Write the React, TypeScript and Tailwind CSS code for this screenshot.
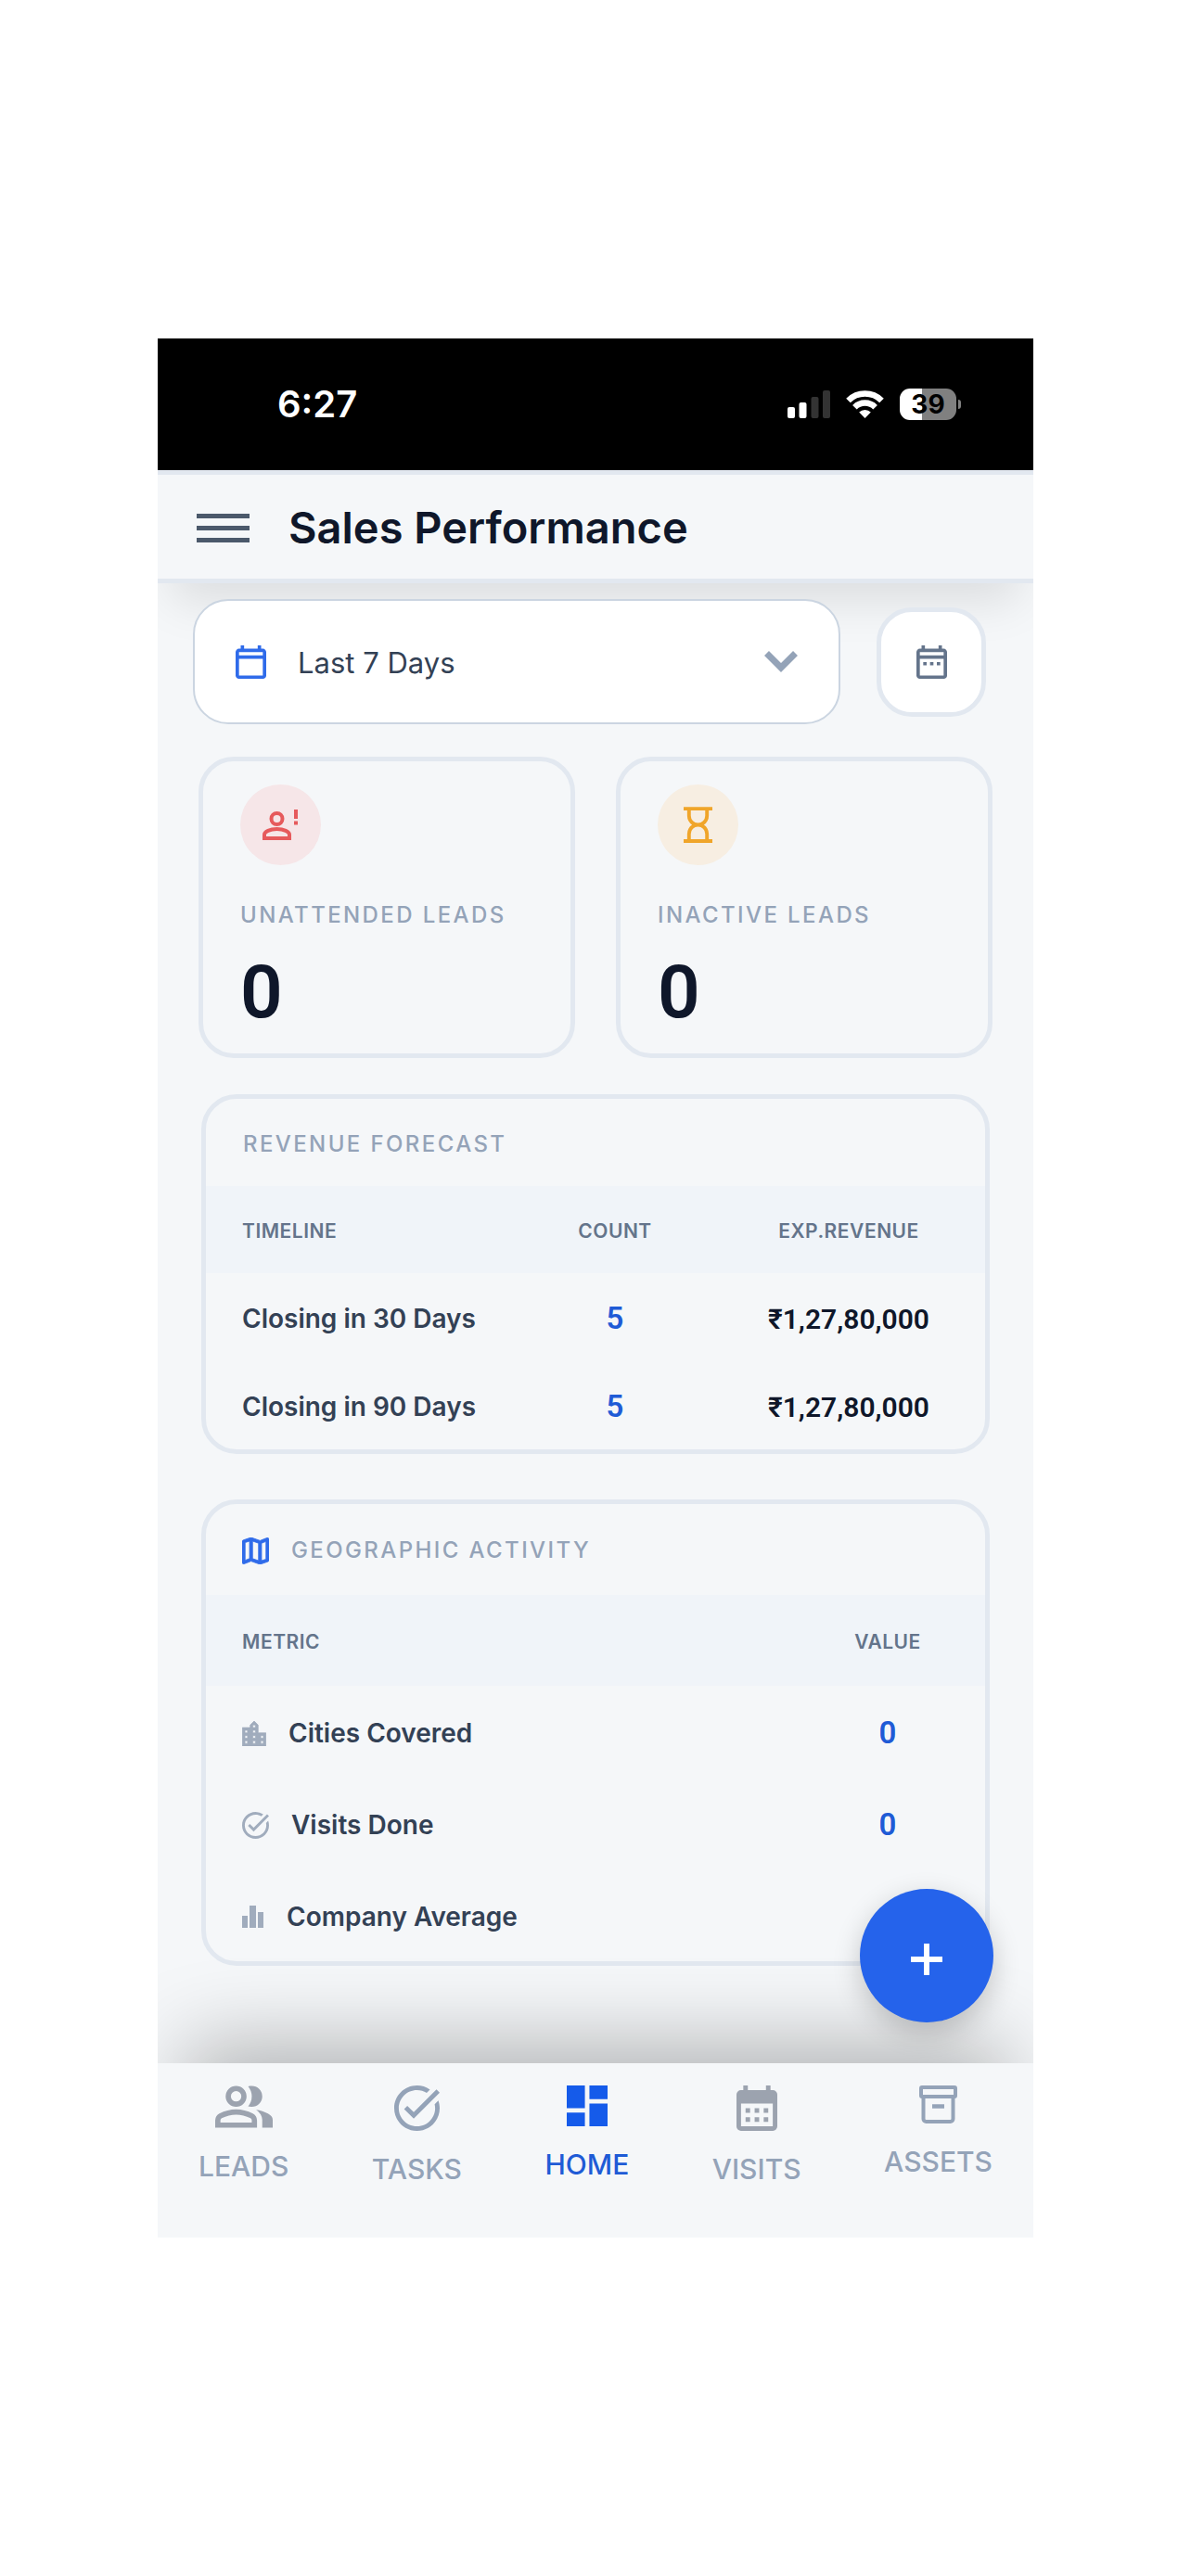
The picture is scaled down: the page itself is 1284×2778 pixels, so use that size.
import React from 'react';

const CALENDAR_FRAME =
  'M5 22q-.825 0-1.413-.587A1.93 1.93 0 0 1 3 20V6q0-.825.588-1.412A1.93 1.93 0 0 1 5 4h1V2h2v2h8V2h2v2h1q.825 0 1.413.588Q21 5.175 21 6v14q0 .825-.587 1.413A1.93 1.93 0 0 1 19 22z';

type IconProps = { className?: string };

const CalendarIcon: React.FC<IconProps> = ({ className }) => (
  <svg viewBox="3 2 18 20" preserveAspectRatio="none" fill="currentColor" fillRule="evenodd" className={className} aria-hidden="true">
    <path d={`${CALENDAR_FRAME}M5 20h14V10H5zM5 8h14V6H5z`} />
  </svg>
);

const DateRangeIcon: React.FC<IconProps> = ({ className }) => (
  <svg viewBox="3 2 18 20" preserveAspectRatio="none" fill="currentColor" fillRule="evenodd" className={className} aria-hidden="true">
    <path d={`${CALENDAR_FRAME}M5 20h14V10H5zM5 8h14V6H5zM7 12h2v2H7zM11 12h2v2h-2zM15 12h2v2h-2z`} />
  </svg>
);

const MonthIcon: React.FC<IconProps> = ({ className }) => (
  <svg viewBox="3 2 18 20" fill="currentColor" fillRule="evenodd" className={className} aria-hidden="true">
    <path d={`${CALENDAR_FRAME}M5 20h14V10H5zM7 12h2v2H7zM11 12h2v2h-2zM15 12h2v2h-2zM7 16h2v2H7zM11 16h2v2h-2zM15 16h2v2h-2z`} />
  </svg>
);

const TaskIcon: React.FC<IconProps> = ({ className }) => (
  <svg viewBox="2 2 20 20" fill="currentColor" className={className} aria-hidden="true">
    <path d="M22 5.18L10.59 16.6l-4.24-4.24l1.41-1.41l2.83 2.83l10-10zm-2.21 5.04c.13.57.21 1.17.21 1.78c0 4.42-3.58 8-8 8s-8-3.58-8-8s3.58-8 8-8c1.58 0 3.04.46 4.28 1.25l1.44-1.44A9.9 9.9 0 0 0 12 2C6.48 2 2 6.48 2 12s4.48 10 10 10s10-4.48 10-10c0-1.19-.22-2.33-.6-3.39z" />
  </svg>
);

const GroupIcon: React.FC<IconProps> = ({ className }) => (
  <svg viewBox="1 4 22 16" fill="currentColor" className={className} aria-hidden="true">
    <path d="M1 20v-2.8q0-.85.438-1.562T2.6 14.55q1.55-.775 3.15-1.162T9 13t3.25.388t3.15 1.162q.725.375 1.163 1.088T17 17.2V20zm18 0v-3q0-1.1-.612-2.113T16.65 13.15q1.275.15 2.4.513t2.1.887q.9.5 1.375 1.112T23 17v3zM9 12q-1.65 0-2.825-1.175T5 8t1.175-2.825T9 4t2.825 1.175T13 8t-1.175 2.825T9 12m10-4q0 1.65-1.175 2.825T15 12q-.275 0-.7-.062t-.7-.138q.675-.8 1.038-1.775T15 8t-.362-2.025T13.6 4.2q.35-.125.7-.163T15 4q1.65 0 2.825 1.175T19 8M3 18h12v-.8q0-.275-.137-.5t-.363-.35q-1.35-.675-2.725-1.012T9 15t-2.775.338T3.5 16.35q-.225.125-.363.35T3 17.2zm6-8q.825 0 1.413-.587T11 8t-.587-1.412T9 6t-1.412.588T7 8t.588 1.413T9 10" />
  </svg>
);

const DashboardIcon: React.FC<IconProps> = ({ className }) => (
  <svg viewBox="3 3 18 18" fill="currentColor" className={className} aria-hidden="true">
    <path d="M13 9V3h8v6zM3 13V3h8v10zm10 8V11h8v10zM3 21v-6h8v6z" />
  </svg>
);

const ArchiveIcon: React.FC<IconProps> = ({ className }) => (
  <svg viewBox="0 0 41 41" fill="none" stroke="currentColor" strokeWidth="4" strokeLinejoin="round" className={className} aria-hidden="true">
    <rect x="2" y="2" width="37" height="10" rx="1" />
    <path d="M4.500 12v24a3 3 0 0 0 3 3h26a3 3 0 0 0 3-3V12" />
    <path d="M14 22.500h13" strokeWidth="4.500" />
  </svg>
);

const MapIcon: React.FC<IconProps> = ({ className }) => (
  <svg viewBox="3 3 18 18" fill="currentColor" stroke="currentColor" strokeWidth="0.500" className={className} aria-hidden="true">
    <path d="m15 21-6-2.1-4.65 1.8q-.5.2-.925-.112T3 19.75v-14q0-.325.188-.575T3.7 4.8L9 3l6 2.1 4.65-1.8q.5-.2.925.113T21 4.250v14q0 .325-.187.575t-.513.375zm-1-2.450V6.850l-4-1.400v11.700zm2 0 3-1V5.700l-3 1.150zM5 18.300l3-1.150V5.450l-3 1z" />
  </svg>
);

const CityIcon: React.FC<IconProps> = ({ className }) => (
  <svg viewBox="3 2 18 19" fill="currentColor" stroke="currentColor" strokeWidth="0.500" className={className} aria-hidden="true">
    <path d="M15 11V5l-3-3-3 3v2H3v14h18V11h-6zm-8 8H5v-2h2v2zm0-4H5v-2h2v2zm0-4H5V9h2v2zm6 8h-2v-2h2v2zm0-4h-2v-2h2v2zm0-4h-2V9h2v2zm0-4h-2V5h2v2zm6 12h-2v-2h2v2zm0-4h-2v-2h2v2z" />
  </svg>
);

const BarsIcon: React.FC<IconProps> = ({ className }) => (
  <svg viewBox="0 0 24 24" fill="currentColor" className={className} aria-hidden="true">
    <path d="M0 11h6v13H0zM8 0h7v24H8zM17 7h6v17h-6z" />
  </svg>
);

const PersonAlertIcon: React.FC<IconProps> = ({ className }) => (
  <svg viewBox="0 0 39 34" fill="none" stroke="currentColor" strokeWidth="4" className={className} aria-hidden="true">
    <circle cx="15.500" cy="10" r="6" />
    <path d="M2 31v-4c0-3 6-6 13.500-6S29 24 29 27v4z" />
    <path d="M36 0v10M36 12.500v4" />
  </svg>
);

const HourglassIcon: React.FC<IconProps> = ({ className }) => (
  <svg viewBox="4 2 16 20" fill="currentColor" className={className} aria-hidden="true">
    <path d="M8 20h8v-3q0-1.650-1.175-2.825T12 13t-2.825 1.175T8 17zm4-9q1.650 0 2.825-1.175T16 7V4H8v3q0 1.650 1.175 2.825T12 11m-8 11v-2h2v-3q0-1.525.713-2.863T8.700 12q-1.275-.8-1.987-2.137T6 7V4H4V2h16v2h-2v3q0 1.525-.712 2.863T15.300 12q1.275.8 1.988 2.138T18 17v3h2v2z" />
  </svg>
);

const StatusBar: React.FC = () => (
  <div className="flex h-[142px] items-center justify-between bg-black pr-[78px] pl-[129px] text-white">
    <span className="text-[40px] font-semibold">6:27</span>
    <div className="flex items-center gap-[17px]">
      <svg viewBox="0 0 46 30" className="h-[30px] w-[46px]" fill="#fff" aria-hidden="true">
        <rect x="0" y="18" width="8" height="12" rx="2" />
        <rect x="12.500" y="13" width="8" height="17" rx="2" />
        <rect x="25.500" y="7" width="8" height="23" rx="2" fill="#333" />
        <rect x="38" y="0" width="8" height="30" rx="2" fill="#333" />
      </svg>
      <svg viewBox="0 0 41 30" className="h-[30px] w-[41px]" fill="none" stroke="#fff" strokeWidth="6.500" aria-hidden="true">
        <path d="M2.500 11a25.500 25.500 0 0 1 36 0" />
        <path d="M9.400 18.200a15.700 15.700 0 0 1 22.200 0" />
        <path d="M20.500 30l-6.300-6.500a9 9 0 0 1 12.600 0z" fill="#fff" stroke="none" />
      </svg>
      <div className="flex items-center gap-[2px]">
        <span className="flex h-[34px] w-[61px] items-center justify-center rounded-[11px] bg-[linear-gradient(90deg,#fff_39%,#808080_39%)] text-[28px] font-bold text-black">
          39
        </span>
        <span className="h-[10px] w-[3px] rounded-r-full bg-[#808080]" />
      </div>
    </div>
  </div>
);

const Header: React.FC = () => (
  <header className="flex h-[122px] items-center gap-[42px] border-y-[5px] border-[#e2e8f0] bg-[#f5f7f9] px-[42px] pt-[2px] shadow-[0_35px_50px_-15px_rgba(0,0,0,0.1)]">
    <button type="button" aria-label="Open menu" className="flex w-[57px] flex-col gap-2">
      <span className="h-[5px] bg-[#4b596b]" />
      <span className="h-[5px] bg-[#4b596b]" />
      <span className="h-[5px] bg-[#4b596b]" />
    </button>
    <h1 className="text-[47px] font-semibold text-[#0f172a]">Sales Performance</h1>
  </header>
);

const Filters: React.FC = () => (
  <div className="flex items-center gap-[39px] pr-[51px] pl-[38px]">
    <div className="flex h-[135px] flex-1 items-center rounded-[38px] border-2 border-[#cbd5e1] bg-white px-[44px]">
      <CalendarIcon className="h-[36px] w-[33px] text-[#2f6bea]" />
      <select
        aria-label="Period"
        defaultValue="7"
        className="mr-8 ml-[34px] h-full flex-1 appearance-none bg-transparent pt-[3px] text-[31px] text-[#334155] outline-none"
      >
        <option value="7">Last 7 Days</option>
        <option value="30">Last 30 Days</option>
        <option value="90">Last 90 Days</option>
      </select>
      <svg viewBox="0 0 36 23" className="h-[23px] w-[36px] text-[#94a3b8]" fill="none" stroke="currentColor" strokeWidth="7" aria-hidden="true">
        <path d="M2.500 2.500L18 18L33.500 2.500" />
      </svg>
    </div>
    <button
      type="button"
      aria-label="Pick dates"
      className="flex size-[118px] items-center justify-center rounded-[38px] border-[5px] border-[#e2e8f0] bg-white text-[#64748b]"
    >
      <DateRangeIcon className="h-[36px] w-[33px]" />
    </button>
  </div>
);

type StatCardProps = { label: string; value: number; tint: string; icon: React.ReactNode };

const StatCard: React.FC<StatCardProps> = ({ label, value, tint, icon }) => (
  <div className="rounded-[38px] border-[5px] border-[#e2e8f0] px-[40px] pt-[25px] pb-[26px]">
    <div className={`flex size-[87px] items-center justify-center rounded-full ${tint}`}>{icon}</div>
    <p className="mt-[38px] text-[24px] leading-[32px] font-medium tracking-widest whitespace-nowrap text-[#94a3b8]">{label}</p>
    <p className="mt-[27px] font-[Roboto] text-[80px] leading-[80px] font-semibold text-[#0f172a]">{value}</p>
  </div>
);

const forecast = [
  { timeline: 'Closing in 30 Days', count: 5, revenue: '₹1,27,80,000' },
  { timeline: 'Closing in 90 Days', count: 5, revenue: '₹1,27,80,000' },
];

const RevenueForecast: React.FC = () => (
  <section className="mx-[47px] mt-[39px] overflow-hidden rounded-[38px] border-[5px] border-[#e2e8f0]">
    <h2 className="flex h-[94px] items-center px-[40px] pt-[3px] text-[24px] font-medium tracking-widest text-[#94a3b8]">REVENUE FORECAST</h2>
    <table className="w-full table-fixed">
      <thead className="bg-[#f0f4f9] text-[21px] tracking-wide text-[#64748b]">
        <tr className="h-[94px]">
          <th className="w-[40%] pt-[3px] pl-[39px] text-left font-semibold">TIMELINE</th>
          <th className="w-[25%] pt-[3px] font-semibold">COUNT</th>
          <th className="w-[35%] pt-[3px] font-semibold">EXP.REVENUE</th>
        </tr>
      </thead>
      <tbody>
        {forecast.map((row) => (
          <tr key={row.timeline} className="h-[95px]">
            <td className="pt-[3px] pl-[39px] text-[28px] font-semibold whitespace-nowrap text-[#334155]">{row.timeline}</td>
            <td className="pt-[3px] text-center font-[Roboto] text-[33px] font-semibold text-[#1f5bd6]">{row.count}</td>
            <td className="pt-[3px] text-center font-[Roboto] text-[30px] font-semibold text-[#0f172a]">{row.revenue}</td>
          </tr>
        ))}
      </tbody>
    </table>
  </section>
);

const metrics = [
  { name: 'Cities Covered', value: '0', icon: <CityIcon className="h-[27px] w-[26px]" /> },
  { name: 'Visits Done', value: '0', icon: <TaskIcon className="size-[29px]" /> },
  { name: 'Company Average', value: '', icon: <BarsIcon className="size-[24px]" /> },
];

const GeographicActivity: React.FC = () => (
  <section className="mx-[47px] mt-[49px] overflow-hidden rounded-[38px] border-[5px] border-[#e2e8f0]">
    <h2 className="flex h-[98px] items-center gap-[24px] px-[39px] pt-[2px] text-[24px] font-medium tracking-widest text-[#94a3b8]">
      <MapIcon className="size-[29px] text-[#2f6bea]" />
      GEOGRAPHIC ACTIVITY
    </h2>
    <table className="w-full table-fixed">
      <thead className="bg-[#f0f4f9] text-[21px] tracking-wide text-[#64748b]">
        <tr className="h-[98px]">
          <th className="w-[75%] pt-[3px] pl-[39px] text-left font-semibold">METRIC</th>
          <th className="w-[25%] pt-[3px] font-semibold">VALUE</th>
        </tr>
      </thead>
      <tbody>
        {metrics.map((row) => (
          <tr key={row.name} className="h-[99px]">
            <td className="pt-[3px] pl-[39px] text-[28px] font-semibold text-[#334155]">
              <div className="flex items-center gap-[24px]">
                <span className="text-[#a0acbd]">{row.icon}</span>
                {row.name}
              </div>
            </td>
            <td className="pt-[3px] text-center font-[Roboto] text-[33px] font-semibold text-[#1f5bd6]">{row.value}</td>
          </tr>
        ))}
      </tbody>
    </table>
  </section>
);

const tabs = [
  { label: 'LEADS', icon: <GroupIcon className="h-[46px] w-[62px] text-[#9ca3af]" /> },
  { label: 'TASKS', icon: <TaskIcon className="size-[49px]" /> },
  { label: 'HOME', icon: <DashboardIcon className="size-[44px] text-[#155bea]" />, active: true },
  { label: 'VISITS', icon: <MonthIcon className="h-[49px] w-[44px] text-[#9ca3af]" /> },
  { label: 'ASSETS', icon: <ArchiveIcon className="size-[41px]" /> },
];

const TabBar: React.FC = () => (
  <nav className="relative flex h-[188px] items-start justify-between bg-[#f5f7f9] px-[44px] pt-6 shadow-[0_-50px_90px_-30px_rgba(0,0,0,0.28)]">
    {tabs.map((tab) => (
      <a
        key={tab.label}
        href={`#${tab.label.toLowerCase()}`}
        className={`flex flex-col items-center gap-[21px] text-[30px] leading-[40px] font-medium ${tab.active ? 'text-[#1f5bd6]' : 'text-[#94a3b8]'}`}
      >
        {tab.icon}
        {tab.label}
      </a>
    ))}
  </nav>
);

const App: React.FC = () => {
  return (
    <div className="flex min-h-screen items-center justify-center bg-white font-[Inter,sans-serif]">
      <div className="w-full max-w-[944px] overflow-hidden bg-[#f5f7f9]">
        <StatusBar />
        <Header />

        <main className="relative pt-[17px] pb-[105px]">
          <Filters />

          <div className="mt-[35px] grid grid-cols-2 gap-[44px] px-[44px]">
            <StatCard
              label="UNATTENDED LEADS"
              value={0}
              tint="bg-[#f6e6e8]"
              icon={<PersonAlertIcon className="h-[34px] w-[39px] text-[#e65a5c]" />}
            />
            <StatCard
              label="INACTIVE LEADS"
              value={0}
              tint="bg-[#f7eee2]"
              icon={<HourglassIcon className="h-[39px] w-[31px] text-[#f0a52a]" />}
            />
          </div>

          <RevenueForecast />
          <GeographicActivity />

          {/* Floating action button */}
          <button
            type="button"
            aria-label="Add"
            className="absolute right-[43px] bottom-[44px] z-10 flex size-[144px] items-center justify-center rounded-full bg-[#2563eb] shadow-[0_10px_30px_rgba(0,0,0,0.2)]"
          >
            <svg viewBox="0 0 34 34" className="mt-2 size-[34px]" fill="#fff" aria-hidden="true">
              <path d="M14 0h6v14h14v6H20v14h-6V20H0v-6h14z" />
            </svg>
          </button>
        </main>

        <TabBar />
      </div>
    </div>
  );
};

export default App;
